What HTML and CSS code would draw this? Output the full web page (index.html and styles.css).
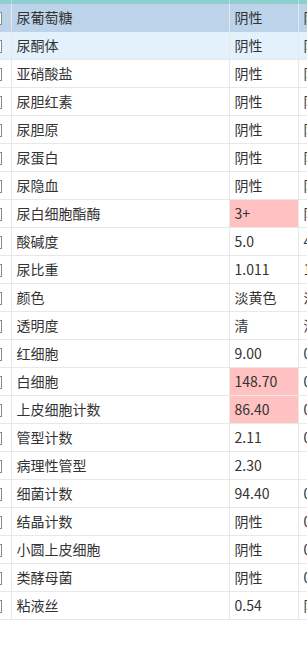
FILE: index.html
```html
<!DOCTYPE html>
<html lang="zh">
<head>
<meta charset="utf-8">
<link rel="stylesheet" href="styles.css">
</head>
<body>
<div class="viewport">
  <table class="grid">
    <colgroup>
      <col class="c-check"><col class="c-name"><col class="c-val"><col class="c-ref">
    </colgroup>
    <thead>
      <tr class="head"><th></th><th></th><th></th><th></th></tr>
    </thead>
    <tbody>
      <tr class="selected"><td><span class="check"></span></td><td>尿葡萄糖</td><td>阴性</td><td>阴性</td></tr>
      <tr class="hover"><td><span class="check"></span></td><td>尿酮体</td><td>阴性</td><td>阴性</td></tr>
      <tr><td><span class="check"></span></td><td>亚硝酸盐</td><td>阴性</td><td>阴性</td></tr>
      <tr><td><span class="check"></span></td><td>尿胆红素</td><td>阴性</td><td>阴性</td></tr>
      <tr><td><span class="check"></span></td><td>尿胆原</td><td>阴性</td><td>阴性</td></tr>
      <tr><td><span class="check"></span></td><td>尿蛋白</td><td>阴性</td><td>阴性</td></tr>
      <tr><td><span class="check"></span></td><td>尿隐血</td><td>阴性</td><td>阴性</td></tr>
      <tr><td><span class="check"></span></td><td>尿白细胞酯酶</td><td class="abn">3+</td><td>阴性</td></tr>
      <tr><td><span class="check"></span></td><td>酸碱度</td><td>5.0</td><td>4.5-8.0</td></tr>
      <tr><td><span class="check"></span></td><td>尿比重</td><td>1.011</td><td>1.003-1.030</td></tr>
      <tr><td><span class="check"></span></td><td>颜色</td><td>淡黄色</td><td>淡黄色</td></tr>
      <tr><td><span class="check"></span></td><td>透明度</td><td>清</td><td>清</td></tr>
      <tr><td><span class="check"></span></td><td>红细胞</td><td>9.00</td><td>0-25</td></tr>
      <tr><td><span class="check"></span></td><td>白细胞</td><td class="abn">148.70</td><td>0-25</td></tr>
      <tr><td><span class="check"></span></td><td>上皮细胞计数</td><td class="abn">86.40</td><td>0-40</td></tr>
      <tr><td><span class="check"></span></td><td>管型计数</td><td>2.11</td><td>0-3</td></tr>
      <tr><td><span class="check"></span></td><td>病理性管型</td><td>2.30</td><td></td></tr>
      <tr><td><span class="check"></span></td><td>细菌计数</td><td>94.40</td><td>0-400</td></tr>
      <tr><td><span class="check"></span></td><td>结晶计数</td><td>阴性</td><td>0-10</td></tr>
      <tr><td><span class="check"></span></td><td>小圆上皮细胞</td><td>阴性</td><td>0-3</td></tr>
      <tr><td><span class="check"></span></td><td>类酵母菌</td><td>阴性</td><td>0-1</td></tr>
      <tr><td><span class="check"></span></td><td>粘液丝</td><td>0.54</td><td>阴性</td></tr>
    </tbody>
  </table>
</div>
</body>
</html>
```

FILE: styles.css
```css
html, body {
  margin: 0;
  padding: 0;
  background: #ffffff;
}

.viewport {
  width: 307px;
  height: 646px;
  overflow: hidden;
}

.grid {
  margin-left: -19px;
  border-collapse: collapse;
  table-layout: fixed;
  width: 400px;
  font-family: "Noto Sans CJK SC", "Microsoft YaHei", sans-serif;
  font-size: 14px;
  color: #333333;
}

.c-check { width: 30px; }
.c-name { width: 218px; }
.c-val { width: 69px; }
.c-ref { width: 83px; }

.grid th,
.grid td {
  border-right: 1px solid #e8e8e8;
  border-bottom: 1px solid #e8e8e8;
  padding: 0 0 0 5px;
  white-space: nowrap;
  overflow: hidden;
  text-align: left;
  font-weight: normal;
  vertical-align: middle;
}

.grid td {
  height: 27px;
  line-height: 27px;
}

.head th {
  height: 3px;
  padding: 0;
  background: #8ecfd0;
  border-right: 1px solid #b9e2e2;
  border-bottom: 1px solid #8ecfd0;
}

.grid td:first-child {
  padding: 0;
  text-align: center;
}

.check {
  display: inline-block;
  width: 11px;
  height: 11px;
  border: 1px solid #8a8a8a;
  background: #ffffff;
  vertical-align: middle;
  margin-top: -2px;
}

.selected td {
  background: #bdd3ea;
  border-bottom-color: #bdd3ea;
}

.hover td {
  background: #e3f1fc;
}

.grid td.abn {
  background: #ffc1c1;
}
```
